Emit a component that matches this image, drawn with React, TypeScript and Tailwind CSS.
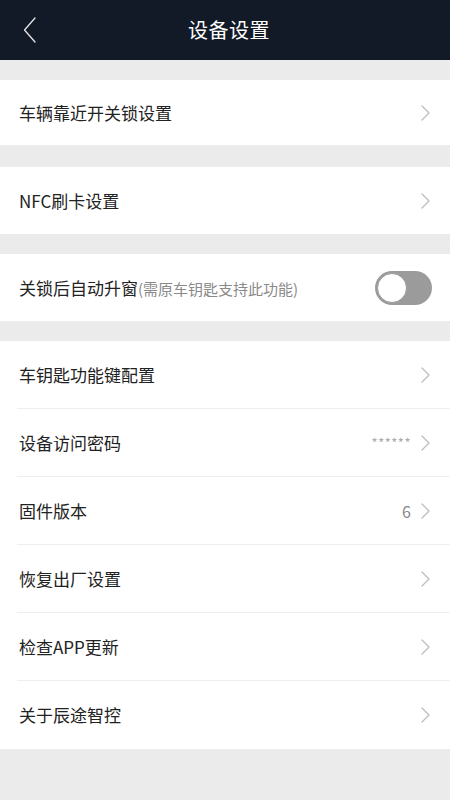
import { useState } from "react";

const font = { fontFamily: '"Noto Sans CJK SC", "Noto Sans", sans-serif' };

const Chevron = () => (
  <svg width="9" height="16" viewBox="0 0 9 16" fill="none" className="shrink-0">
    <path d="M1 1l7 7-7 7" stroke="#bdbdbd" strokeWidth="1.3" strokeLinecap="round" strokeLinejoin="round" />
  </svg>
);

const Row = ({ label, value, h = "h-[68px]", divider = false }: { label: string; value?: React.ReactNode; h?: string; divider?: boolean }) => (
  <div className={`relative flex items-center justify-between bg-white pl-[19px] pr-[20px] ${h}`}>
    <span className="text-[17px] text-[#222]">{label}</span>
    <div className="flex items-center gap-[10px]">
      {value}
      <Chevron />
    </div>
    {divider && <div className="absolute bottom-0 left-[17px] right-0 h-px bg-[#efefef]" />}
  </div>
);

export default function App() {
  const [on, setOn] = useState(false);

  return (
    <div className="w-[450px] h-[800px] bg-[#ebebeb] overflow-hidden" style={font}>
      {/* header */}
      <div className="relative flex h-[60px] items-center justify-center bg-[#131a27]">
        <svg width="14" height="26" viewBox="0 0 14 26" fill="none" className="absolute left-[23px] top-[17px]">
          <path d="M12 1L1.5 13 12 25" stroke="#e6e6e6" strokeWidth="1.3" strokeLinecap="round" strokeLinejoin="round" />
        </svg>
        <h1 className="pl-[8px] text-[20px] font-normal text-white tracking-[0.5px]">设备设置</h1>
      </div>

      <div className="h-[20px]" />
      <Row label="车辆靠近开关锁设置" h="h-[65px]" />

      <div className="h-[22px]" />
      <Row label="NFC刷卡设置" h="h-[67px]" />

      <div className="h-[20px]" />
      <div className="flex h-[67px] items-center justify-between bg-white pl-[19px] pr-[18px]">
        <span className="text-[17px] text-[#222]">
          关锁后自动升窗<span className="text-[15px] text-[#8a8a8a]">(需原车钥匙支持此功能)</span>
        </span>
        <button
          onClick={() => setOn(!on)}
          className={`relative h-[34px] w-[57px] rounded-full ${on ? "bg-[#4cd964]" : "bg-[#9b9b9b]"}`}
        >
          <span
            className={`absolute top-[2px] h-[30px] w-[30px] rounded-full border-[1.5px] border-[#9b9b9b] bg-white ${on ? "left-[25px]" : "left-[2px]"}`}
          />
        </button>
      </div>

      <div className="h-[20px]" />
      <div className="flex flex-col">
        <Row label="车钥匙功能键配置" divider />
        <Row label="设备访问密码" divider value={<span className="text-[13px] tracking-[0.5px] text-[#aaa]">******</span>} />
        <Row label="固件版本" divider value={<span className="text-[16px] text-[#888]">6</span>} />
        <Row label="恢复出厂设置" divider />
        <Row label="检查APP更新" divider />
        <Row label="关于辰途智控" />
      </div>
    </div>
  );
}
